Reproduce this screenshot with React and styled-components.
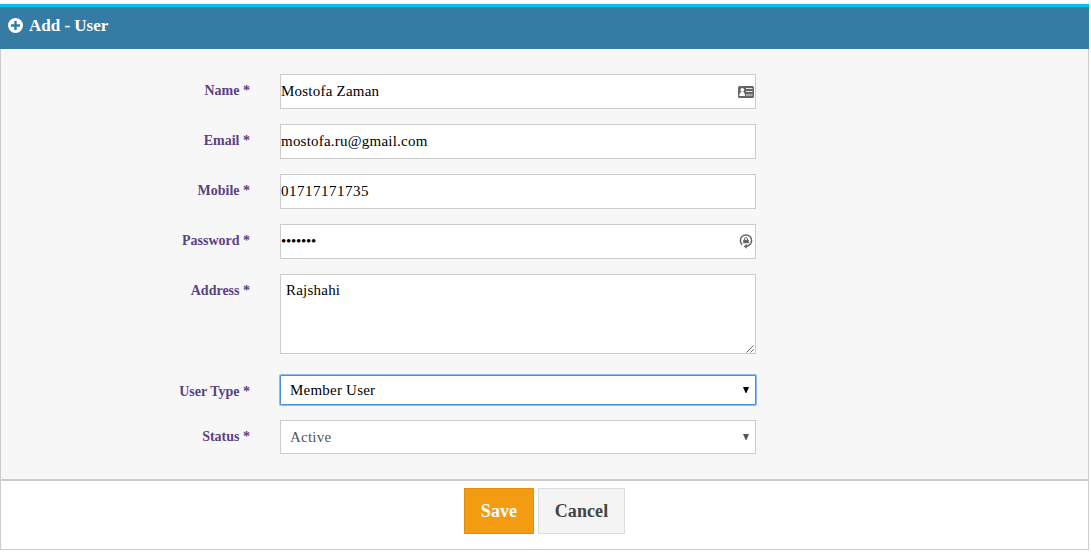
import React from "react";
import styled, { createGlobalStyle, css } from "styled-components";

const GlobalStyle = createGlobalStyle`
  *, *::before, *::after { box-sizing: border-box; }
  body {
    margin: 0;
    background: #fff;
    font-family: "Liberation Serif", "Times New Roman", serif;
    overflow: hidden;
  }
`;

const Panel = styled.form`
  width: 1089px;
  margin-top: 4px;
  border-top: 3px solid #00c0ef;
`;

const Header = styled.header`
  display: flex;
  align-items: center;
  gap: 6px;
  height: 42px;
  padding: 0 8px 5px;
  background: #357ca5;
  color: #fff;
`;

const Title = styled.h1`
  margin: 0;
  font-size: 17px;
  line-height: 20px;
  font-weight: bold;
`;

const Body = styled.div`
  height: 430px;
  padding: 25px 0 0;
  border: solid #ccc;
  border-width: 0 1px;
  background: #f7f7f7;
`;

const Row = styled.div`
  display: grid;
  grid-template-columns: 249px 476px;
  column-gap: 30px;
  align-items: start;
  margin-bottom: ${(p) => p.$gap ?? 15}px;
`;

const Label = styled.label`
  padding-top: 8px;
  text-align: right;
  font-size: 14px;
  line-height: 17px;
  font-weight: bold;
  color: #5b4282;
`;

const Field = styled.div`
  position: relative;
  display: flex;
`;

const control = css`
  display: block;
  width: 100%;
  margin: 0;
  border: 1px solid #ccc;
  border-radius: 0;
  outline: none;
  background: #fff;
  color: #000;
  font-family: inherit;
  font-size: 15px;
  letter-spacing: ${(p) => p.$spacing ?? 0.22}px;
`;

const Input = styled.input`
  ${control}
  height: 35px;
  padding: 0 30px 0 0;
`;

const TextArea = styled.textarea`
  ${control}
  height: 80px;
  padding: 7px 5px;
  line-height: 17px;
  resize: none;
`;

const Select = styled.select`
  ${control}
  appearance: none;
  height: ${(p) => (p.$active ? 30 : 34)}px;
  padding: 0 30px 0 9px;
  color: ${(p) => (p.$active ? "#000" : "#555")};
  ${(p) =>
    p.$active &&
    css`
      border-color: #4a90e2;
      box-shadow: 0 0 0 1px #8dbaf0;
      border-radius: 1px;
    `}
`;

const Adornment = styled.span`
  position: absolute;
  top: ${(p) => p.$top}px;
  right: ${(p) => p.$right}px;
  display: flex;
  pointer-events: none;
  color: ${(p) => p.$color ?? "#666"};
`;

const Footer = styled.footer`
  display: flex;
  justify-content: center;
  align-items: flex-start;
  gap: 4px;
  height: 71px;
  padding-top: 7px;
  border: solid #ccc;
  border-width: 2px 1px 1px;
  background: #fff;
`;

const Button = styled.button`
  width: ${(p) => (p.$primary ? 70 : 87)}px;
  height: 46px;
  padding: 0;
  border: 1px solid ${(p) => (p.$primary ? "#e08e0b" : "#ddd")};
  background: ${(p) => (p.$primary ? "#f39c12" : "#f4f4f4")};
  color: ${(p) => (p.$primary ? "#fff" : "#444")};
  font: bold 18px "Liberation Serif", "Times New Roman", serif;
  letter-spacing: 0.1px;
`;

const PlusIcon = () => (
  <svg width="15" height="15" viewBox="0 0 15 15">
    <circle cx="7.5" cy="7.5" r="7.5" fill="#fff" />
    <path d="M7.5 3v9M3 7.5h9" stroke="#357ca5" strokeWidth="2.4" />
  </svg>
);

const CardIcon = () => (
  <svg width="16" height="12" viewBox="0 0 16 12">
    <rect width="16" height="12" rx="1.5" fill="currentColor" />
    <circle cx="4.3" cy="3.9" r="1.9" fill="#fff" />
    <path d="M1.3 10V8.5L3 6h2.6L7 8.5V10Z" fill="#fff" />
    <path d="M8 2.5h6.5M8 5.5h6.5M8 9h6.5" stroke="#e4e4e4" strokeWidth="1.2" />
  </svg>
);

const LockIcon = () => (
  <svg width="14" height="15" viewBox="0 0 14 15" fill="none" stroke="currentColor">
    <path d="M3.2 10.6A5.6 5.6 0 1 1 10.8 10.6Q9.4 12.3 7 12.4" strokeWidth="1.5" />
    <path d="M7.8 10v4.8L4.6 12.4Z" fill="currentColor" stroke="none" />
    <path d="M5.5 6V5a1.5 1.5 0 0 1 3 0V6" strokeWidth="0.9" />
    <rect x="4.2" y="5.8" width="5.6" height="3.4" fill="currentColor" stroke="none" />
  </svg>
);

const GripIcon = () => (
  <svg width="8" height="8" viewBox="0 0 8 8" stroke="#555" strokeWidth="0.9">
    <path d="M0.5 7.5l7-7M4.5 7.5l3-3" />
  </svg>
);

const ArrowIcon = () => (
  <svg width="6" height="6" viewBox="0 0 6 6">
    <path d="M0 0h6L3.4 6H2.6Z" fill="currentColor" />
  </svg>
);

export default function App() {
  return (
    <>
      <GlobalStyle />
      <Panel onSubmit={(e) => e.preventDefault()}>
        <Header>
          <PlusIcon />
          <Title>Add - User</Title>
        </Header>
        <Body>
          <Row>
            <Label htmlFor="name">Name *</Label>
            <Field>
              <Input id="name" defaultValue="Mostofa Zaman" />
              <Adornment $top={12} $right={2}><CardIcon /></Adornment>
            </Field>
          </Row>
          <Row>
            <Label htmlFor="email">Email *</Label>
            <Field>
              <Input id="email" defaultValue="mostofa.ru@gmail.com" spellCheck={false} />
            </Field>
          </Row>
          <Row>
            <Label htmlFor="mobile">Mobile *</Label>
            <Field>
              <Input id="mobile" defaultValue="01717171735" $spacing={0.5} />
            </Field>
          </Row>
          <Row>
            <Label htmlFor="password">Password *</Label>
            <Field>
              <Input id="password" type="password" defaultValue="1234567" $spacing={-0.25} />
              <Adornment $top={10} $right={3}><LockIcon /></Adornment>
            </Field>
          </Row>
          <Row $gap={21}>
            <Label htmlFor="address">Address *</Label>
            <Field>
              <TextArea id="address" defaultValue="Rajshahi" spellCheck={false} />
              <Adornment $top={71} $right={2}><GripIcon /></Adornment>
            </Field>
          </Row>
          <Row>
            <Label htmlFor="type">User Type *</Label>
            <Field>
              <Select id="type" $active>
                <option>Member User</option>
              </Select>
              <Adornment $top={12} $right={7} $color="#000"><ArrowIcon /></Adornment>
            </Field>
          </Row>
          <Row>
            <Label htmlFor="status">Status *</Label>
            <Field>
              <Select id="status">
                <option>Active</option>
              </Select>
              <Adornment $top={14} $right={7} $color="#555"><ArrowIcon /></Adornment>
            </Field>
          </Row>
        </Body>
        <Footer>
          <Button type="submit" $primary>Save</Button>
          <Button type="button">Cancel</Button>
        </Footer>
      </Panel>
    </>
  );
}
